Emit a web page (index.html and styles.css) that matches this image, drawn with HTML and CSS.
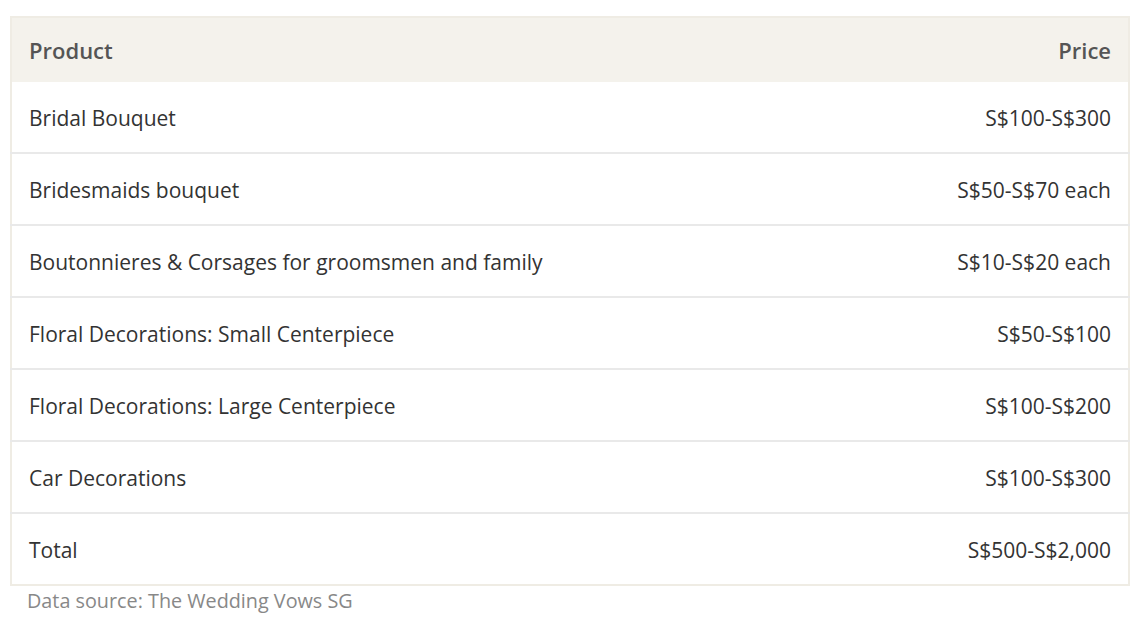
FILE: index.html
```html
<!DOCTYPE html>
<html>
<head>
<meta charset="utf-8">
<link rel="stylesheet" href="styles.css">
</head>
<body>
<div class="wrap">
  <table class="prices">
    <thead>
      <tr><th class="l">Product</th><th class="r">Price</th></tr>
    </thead>
    <tbody>
      <tr><td class="l">Bridal Bouquet</td><td class="r">S$100-S$300</td></tr>
      <tr><td class="l">Bridesmaids bouquet</td><td class="r">S$50-S$70 each</td></tr>
      <tr><td class="l">Boutonnieres &amp; Corsages for groomsmen and family</td><td class="r">S$10-S$20 each</td></tr>
      <tr><td class="l">Floral Decorations: Small Centerpiece</td><td class="r">S$50-S$100</td></tr>
      <tr><td class="l">Floral Decorations: Large Centerpiece</td><td class="r">S$100-S$200</td></tr>
      <tr><td class="l">Car Decorations</td><td class="r">S$100-S$300</td></tr>
      <tr><td class="l">Total</td><td class="r">S$500-S$2,000</td></tr>
    </tbody>
  </table>
  <p class="source">Data source: The Wedding Vows SG</p>
</div>
</body>
</html>
```

FILE: styles.css
```css
html, body {
  margin: 0;
  padding: 0;
  background: #ffffff;
}
body {
  font-family: "Open Sans", "Noto Sans", sans-serif;
  color: #333333;
}
.wrap {
  padding: 16px 18px 0 10px;
}
.prices {
  width: 1120px;
  border-collapse: collapse;
  border: 2px solid #efece4;
  font-size: 21px;
}
.prices th {
  background: #f4f2ec;
  color: #555555;
  font-size: 22px;
  font-weight: 600;
  height: 64px;
  padding: 0 17px 0 17px;
  text-align: left;
}
.prices td {
  height: 68px;
  padding: 2px 17px 0;
  border-top: 2px solid #e9e9e9;
}
.prices tbody tr:first-child td {
  border-top: none;
}
.prices .r {
  text-align: right;
}
.source {
  margin: 1px 0 0 17px;
  font-size: 19.8px;
  color: #888888;
}
```
